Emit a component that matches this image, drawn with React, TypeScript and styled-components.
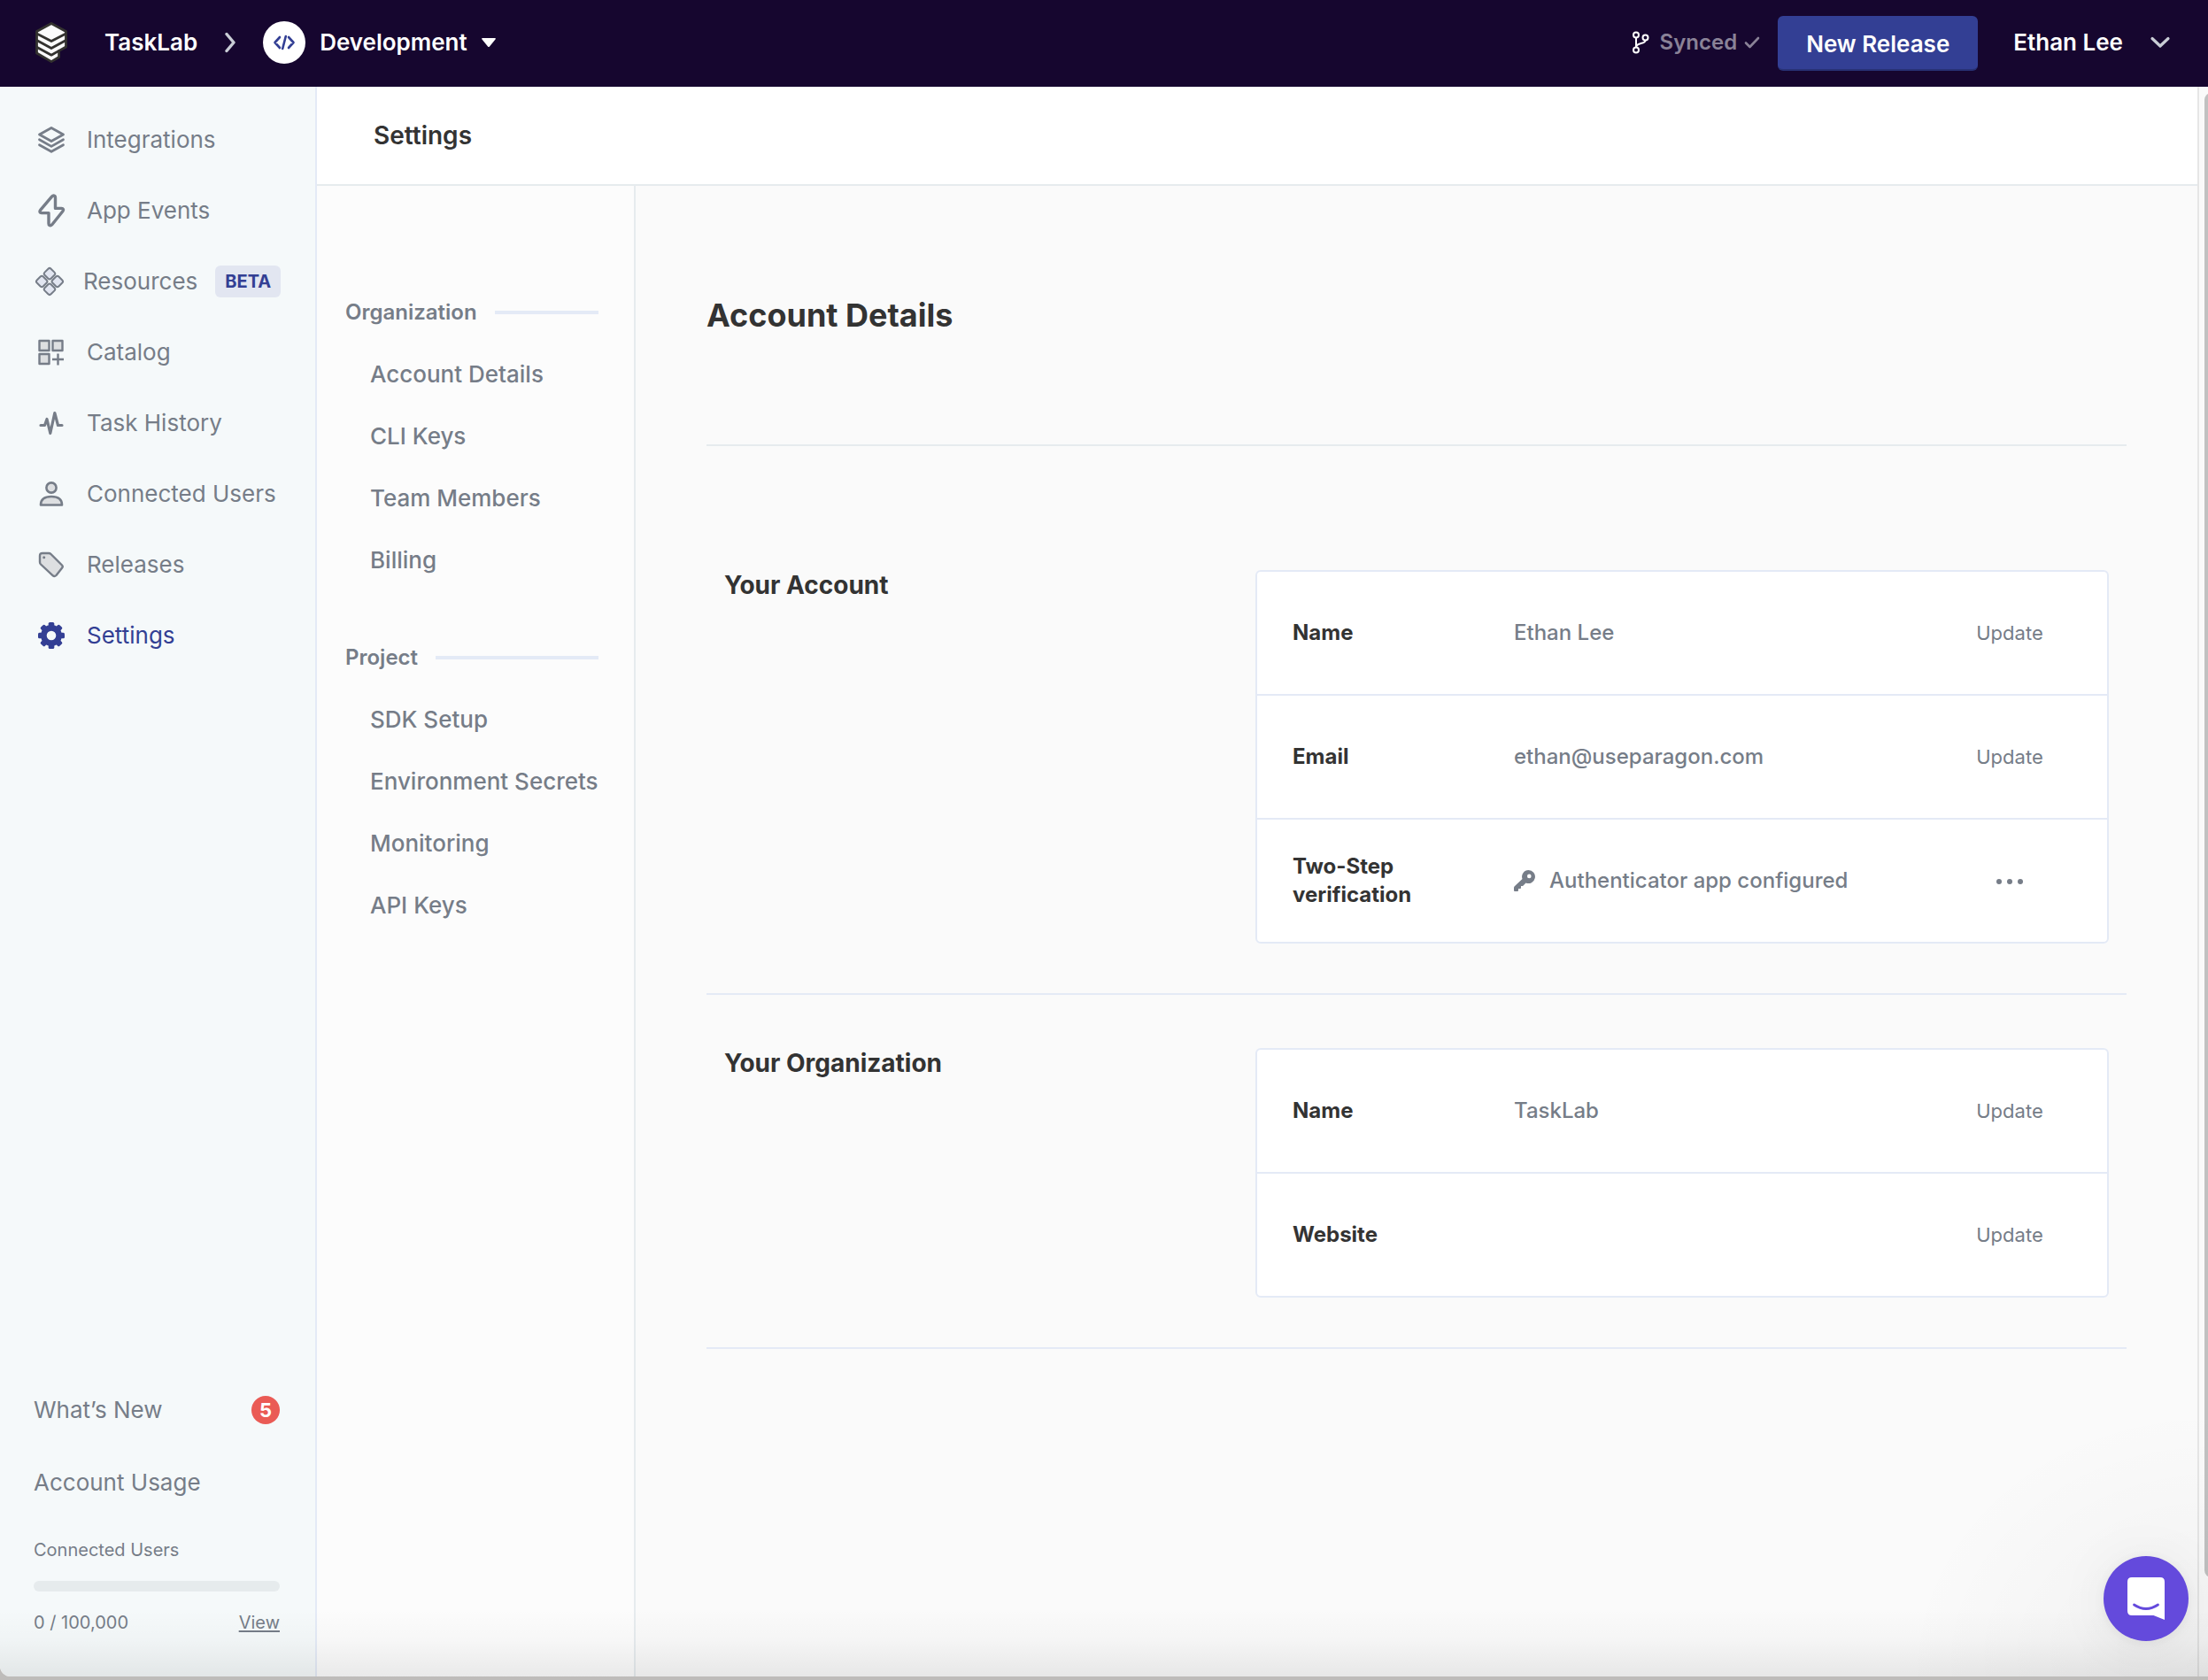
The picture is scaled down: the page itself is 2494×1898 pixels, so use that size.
import React from "react";
import styled, { createGlobalStyle, css } from "styled-components";

const color = {
  topbar: "#16062f",
  primary: "#333f94",
  primaryShade: "#283275",
  ink: "#333333",
  muted: "#767d88",
  line: "#e6ebee",
  lineBlue: "#e4eaf6",
  sidebar: "#f5f9fa",
};

const GlobalStyle = createGlobalStyle`
  * { box-sizing: border-box; }
  html, body, #root { height: 100%; }
  body {
    margin: 0;
    background: #bebcba;
    color: ${color.ink};
    font-family: Inter, "Liberation Sans", sans-serif;
    font-size: 26px;
    line-height: 32px;
    overflow: hidden;
  }
  h1, h2, h3, p, ul { margin: 0; padding: 0; }
  ul { list-style: none; }
  a { color: inherit; text-decoration: none; }
  button { font: inherit; color: inherit; background: none; border: 0; padding: 0; cursor: pointer; }
  svg { display: block; flex: none; }
`;

const Desktop = styled.div`
  height: 100%;
  padding-bottom: 4px;
`;

const Window = styled.div`
  position: relative;
  display: flex;
  flex-direction: column;
  height: 100%;
  overflow: hidden;
  border-bottom-left-radius: 12px;
  background: #fafafa;
`;

const Topbar = styled.header`
  display: flex;
  align-items: center;
  justify-content: space-between;
  height: 98px;
  flex: none;
  padding: 0 42px 0 38px;
  background: ${color.topbar};
  color: #ffffff;
  font-weight: 600;
`;

const Crumbs = styled.nav`
  display: flex;
  align-items: center;
  padding-bottom: 2px;
`;

const LogoLink = styled.a`
  display: flex;
  margin-right: 40px;
`;

const CrumbChevron = styled.span`
  display: flex;
  margin: 0 30px;
  color: #c9cdd6;
`;

const ProjectButton = styled.button`
  display: flex;
  align-items: center;
  gap: 16px;
`;

const ProjectBadge = styled.span`
  display: grid;
  place-items: center;
  width: 48px;
  height: 48px;
  border-radius: 50%;
  background: #ffffff;
  color: ${color.primary};
`;

const TopActions = styled.div`
  display: flex;
  align-items: center;
`;

const SyncStatus = styled.div`
  display: flex;
  align-items: center;
  padding-bottom: 2px;
  margin-right: 20px;
  color: #8a8297;
  font-size: 24px;
`;

const SyncLabel = styled.span`
  margin: 0 8px 0 12px;
`;

const ReleaseButton = styled.button`
  height: 62px;
  padding: 4px 32px 0;
  border-radius: 6px;
  border-bottom: 2px solid ${color.primaryShade};
  background: ${color.primary};
  color: #ffffff;
  font-weight: 600;
`;

const UserButton = styled.button`
  display: flex;
  align-items: center;
  gap: 30px;
  margin-left: 40px;
  padding-bottom: 2px;
`;

const Body = styled.div`
  display: flex;
  flex: 1;
  min-height: 0;
`;

const Sidebar = styled.aside`
  display: flex;
  flex-direction: column;
  justify-content: space-between;
  flex: none;
  width: 358px;
  padding: 20px 40px 49px 38px;
  border-right: 2px solid ${color.lineBlue};
  background: ${color.sidebar};
  color: ${color.muted};
`;

const NavLink = styled.a<{ $active?: boolean }>`
  display: flex;
  align-items: center;
  gap: 20px;
  height: 80px;
  white-space: nowrap;
  ${(p) => p.$active && css`color: ${color.primary};`}
`;

const NavIcon = styled.span<{ $narrow?: boolean }>`
  display: flex;
  justify-content: center;
  flex: none;
  width: ${(p) => (p.$narrow ? 36 : 40)}px;
`;

const BetaTag = styled.span`
  margin-left: auto;
  padding: 0 11px;
  border-radius: 6px;
  background: #e2e6f1;
  color: ${color.primary};
  font-size: 20px;
  font-weight: 700;
  line-height: 36px;
`;

const FooterLink = styled.a`
  display: flex;
  align-items: center;
  justify-content: space-between;
  height: 82px;
`;

const CountBadge = styled.span`
  width: 32px;
  border-radius: 16px;
  background: #ea5b55;
  color: #ffffff;
  font-size: 22px;
  font-weight: 700;
  line-height: 32px;
  text-align: center;
`;

const Usage = styled.section`
  display: flex;
  flex-direction: column;
  gap: 23px;
  padding-top: 23px;
  font-size: 20px;
  line-height: 24px;
`;

const UsageTrack = styled.div`
  height: 12px;
  border-radius: 6px;
  background: #e6ebed;
`;

const UsageRow = styled.div`
  display: flex;
  justify-content: space-between;
`;

const UsageLink = styled.a`
  text-decoration: underline;
  text-underline-offset: 2px;
`;

const Page = styled.div`
  display: flex;
  flex-direction: column;
  flex: 1;
  min-width: 0;
`;

const PageHeader = styled.div`
  flex: none;
  height: 112px;
  padding: 0 64px;
  border-bottom: 2px solid ${color.line};
  background: #ffffff;
`;

const PageTitle = styled.h1`
  font-size: 28px;
  font-weight: 600;
  line-height: 110px;
`;

const Columns = styled.div`
  display: flex;
  flex: 1;
  min-height: 0;
`;

const SettingsNav = styled.nav`
  display: flex;
  flex-direction: column;
  gap: 40px;
  flex: none;
  width: 360px;
  padding: 108px 40px 0 32px;
  border-right: 2px solid ${color.line};
  background: #fcfcfc;
  color: ${color.muted};
`;

const GroupTitle = styled.h2`
  display: flex;
  align-items: center;
  gap: 20px;
  height: 70px;
  font-size: 24px;
  font-weight: 600;

  &::after {
    content: "";
    flex: 1;
    height: 4px;
    background: ${color.lineBlue};
  }
`;

const GroupLink = styled.a`
  display: block;
  padding-left: 28px;
  font-weight: 500;
  line-height: 70px;
  white-space: nowrap;
`;

const Main = styled.main`
  flex: 1;
  min-width: 0;
  padding: 0 80px;
`;

const MainTitle = styled.h2`
  padding: 124px 0;
  margin-bottom: 80px;
  border-bottom: 2px solid ${color.line};
  font-size: 36px;
  font-weight: 700;
  line-height: 44px;
`;

const Section = styled.section`
  display: flex;
  align-items: flex-start;
  padding: 60px 20px 56px;
  border-bottom: 2px solid ${color.lineBlue};
`;

const SectionTitle = styled.h3`
  flex: 0 0 600px;
  font-size: 28px;
  font-weight: 700;
  line-height: 34px;
`;

const Card = styled.table`
  flex: 1;
  width: 100%;
  table-layout: fixed;
  border: 2px solid ${color.lineBlue};
  border-radius: 6px;
  border-collapse: separate;
  border-spacing: 0;
  background: #ffffff;
  font-size: 24px;
`;

const CardRow = styled.tr`
  height: 140px;

  & > * {
    padding: 0;
    border-bottom: 2px solid ${color.lineBlue};
  }

  &:last-child {
    height: 138px;
  }

  &:last-child > * {
    border-bottom: 0;
  }
`;

const RowLabel = styled.th`
  width: 290px;
  && {
    padding: 0 80px 0 40px;
  }
  font-weight: 700;
  text-align: left;
`;

const RowValue = styled.td`
  color: ${color.muted};
  font-weight: 500;
`;

const RowAction = styled.td`
  width: 220px;
  color: ${color.muted};
  text-align: center;
`;

const ValueWithIcon = styled.span`
  display: flex;
  align-items: center;
  gap: 16px;
`;

const UpdateButton = styled.button`
  font-size: 22px;
`;

const MoreButton = styled.button`
  display: inline-flex;
  vertical-align: middle;
`;

const ScrollRail = styled.div`
  flex: none;
  width: 12px;
  padding: 7px 0 112px 6px;
  border-left: 2px solid #e6e6e6;
  background: #fafafa;
  overflow: hidden;
`;

const ScrollThumb = styled.div`
  width: 16px;
  height: 100%;
  border-radius: 8px;
  background: #c1c1c1;
`;

const BottomShade = styled.div`
  position: absolute;
  inset: auto 0 0 0;
  height: 76px;
  background: linear-gradient(to bottom, rgba(0, 0, 0, 0), rgba(0, 0, 0, 0.02) 45%, rgba(0, 0, 0, 0.075));
  pointer-events: none;
`;

const CornerShade = styled.div`
  position: absolute;
  right: 0;
  bottom: 0;
  width: 340px;
  height: 300px;
  background: radial-gradient(ellipse at bottom right, rgba(0, 0, 0, 0.04), rgba(0, 0, 0, 0) 72%);
  pointer-events: none;
`;

const ChatButton = styled.button`
  position: absolute;
  right: 22px;
  bottom: 40px;
  display: grid;
  place-items: center;
  width: 96px;
  height: 96px;
  border-radius: 50%;
  background: #644adc;
  box-shadow: 0 2px 12px rgba(0, 0, 0, 0.06), 0 4px 64px rgba(0, 0, 0, 0.06);
`;

/* ---------- drawings ---------- */

const Logo = () => (
  <svg width="40" height="48" viewBox="0 0 40 48" fill="#fbfbfb" stroke="#33322f" strokeWidth="2.800" strokeLinejoin="round">
    <path d="M20 2.400 36.500 11.500V29L28.600 33.400V40.500L20 45.600 3.500 36V11.500Z" />
    <path d="M3.500 14 20 22.500 36.500 14M3.500 21.500 20 30.500 36.500 21.500M3.500 29.200 20 38.200 28.600 33.400" fill="none" />
  </svg>
);

const ChevronRight = () => (
  <svg width="14" height="24" viewBox="0 0 14 24" fill="none" stroke="currentColor" strokeWidth="3.400" strokeLinecap="round" strokeLinejoin="round">
    <path d="M3 2.500 11 12 3 21.500" />
  </svg>
);

const CodeIcon = () => (
  <svg width="26" height="20" viewBox="0 0 26 20" fill="none" stroke="currentColor" strokeWidth="2.600" strokeLinecap="round" strokeLinejoin="round">
    <path d="M8 4 2.500 10 8 16M18 4 23.500 10 18 16M14.800 3 11.200 17" />
  </svg>
);

const CaretDown = () => (
  <svg width="16" height="10" viewBox="0 0 16 10" fill="currentColor">
    <path d="M1 0H15Q16.500 .5 15.500 1.600L9 9.400Q8 10.400 7 9.400L.5 1.600Q-.5 .5 1 0Z" />
  </svg>
);

const BranchIcon = () => (
  <svg width="20" height="26" viewBox="0 0 20 26" fill="none" stroke="#ffffff" strokeWidth="2">
    <circle cx="5" cy="4.500" r="3" />
    <circle cx="5" cy="21.500" r="3" />
    <circle cx="15.500" cy="7.500" r="3" />
    <path d="M5 7.500V18.500M15.500 10.500C15.500 15.500 5 12.500 5 18.500" />
  </svg>
);

const CheckIcon = () => (
  <svg width="18" height="14" viewBox="0 0 18 14" fill="none" stroke="currentColor" strokeWidth="2.600" strokeLinecap="round" strokeLinejoin="round">
    <path d="M2 7.500 6.500 12 16 2" />
  </svg>
);

const ChevronDown = () => (
  <svg width="24" height="14" viewBox="0 0 24 14" fill="none" stroke="#c9cdd6" strokeWidth="3.200" strokeLinecap="round" strokeLinejoin="round">
    <path d="M3 2.500 12 11 21 2.500" />
  </svg>
);

const LayersIcon = () => (
  <svg width="32" height="32" viewBox="0 0 32 32" fill="none" stroke="currentColor" strokeWidth="2.800" strokeLinejoin="round" strokeLinecap="round">
    <path d="M16 2.500 29.500 10 16 17.500 2.500 10Z" />
    <path d="M2.500 15.800 16 23.400 29.500 15.800M2.500 21.700 16 29.300 29.500 21.700" />
  </svg>
);

const BoltIcon = () => (
  <svg width="32" height="38" viewBox="0 0 32 38" fill="none" stroke="currentColor" strokeWidth="3.400" strokeLinejoin="round">
    <path d="M16.500 3.200 3.800 18.200C2.300 20 3 21.600 5 21.600H13V33.500C13 36 15.200 36.500 16.800 34.700L28.800 19.700C30.200 17.900 29.400 16.400 27.500 16.400H20.500V4.400C20.500 1.800 18.200 1.200 16.500 3.200Z" />
  </svg>
);

const diamondCentres: [number, number][] = [[17, 8.2], [8.2, 17], [25.8, 17], [17, 25.8]];

const ResourcesIcon = () => (
  <svg width="34" height="34" viewBox="0 0 34 34" fill="#e2e6f1" stroke="currentColor" strokeWidth="2">
    {diamondCentres.map(([x, y]) => (
      <rect key={`${x}-${y}`} x={x - 5} y={y - 5} width="10" height="10" rx="2.200" transform={`rotate(45 ${x} ${y})`} />
    ))}
  </svg>
);

const CatalogIcon = () => (
  <svg width="30" height="30" viewBox="0 0 30 30" fill="#dddfe1" stroke="currentColor" strokeWidth="2.400" strokeLinejoin="round">
    <rect x="1.500" y="2" width="11" height="11" />
    <rect x="16.500" y="2" width="11" height="11" />
    <rect x="1.500" y="17" width="11" height="11" />
    <path d="M22.500 16.500V29.500M16 23H29" />
  </svg>
);

const PulseIcon = () => (
  <svg width="30" height="30" viewBox="0 0 30 30" fill="none" stroke="currentColor" strokeWidth="3.200" strokeLinecap="round" strokeLinejoin="round">
    <path d="M3 17.500H7.500L10 10.500 13.800 26.500 18.800 3.500 22.500 17.500H27" />
  </svg>
);

const PersonIcon = () => (
  <svg width="30" height="30" viewBox="0 0 30 30" fill="#dddfe1" stroke="currentColor" strokeWidth="2.600" strokeLinejoin="round">
    <circle cx="15" cy="8" r="5.600" />
    <path d="M3 27.500C3 20.500 8 18 15 18S27 20.500 27 27.500Z" />
  </svg>
);

const TagIcon = () => (
  <svg width="30" height="30" viewBox="0 0 30 30" fill="#dddfe1" stroke="currentColor" strokeWidth="2.400" strokeLinejoin="round">
    <path d="M2 5Q2 2 5 2H12Q13.500 2 14.500 3L27 15.500Q28.500 17 27 18.700L20.500 27Q18.500 29 16.500 27.200L3 14.500Q2 13.500 2 12Z" />
    <circle cx="6.700" cy="6.800" r="1.500" fill="currentColor" stroke="none" />
  </svg>
);

const gearAngles = [0, 45, 90, 135];

const GearIcon = () => (
  <svg width="30" height="30" viewBox="0 0 30 30" fill="none" stroke="currentColor">
    <circle cx="15" cy="15" r="8.600" strokeWidth="6.600" />
    <g fill="currentColor" stroke="none">
      {gearAngles.map((a) => (
        <g key={a} transform={`rotate(${a} 15 15)`}>
          <rect x="11.700" y="0" width="6.600" height="6" rx="1.600" />
          <rect x="11.700" y="24" width="6.600" height="6" rx="1.600" />
        </g>
      ))}
    </g>
  </svg>
);

const KeyIcon = () => (
  <svg width="24" height="24" viewBox="0 0 24 24" fill="currentColor">
    <path fillRule="evenodd" d="M16.500 0A7.500 7.500 0 0 0 9.500 10L.5 18.500Q0 19 0 20V23Q0 24 1 24H4Q5 24 5 23V21H7Q8 21 8 20V18H10L13.500 14.400A7.500 7.500 0 1 0 16.500 0ZM17.300 4.600A2.300 2.300 0 1 1 17.300 9.200 2.300 2.300 0 0 1 17.300 4.600Z" />
  </svg>
);

const DotsIcon = () => (
  <svg width="32" height="8" viewBox="0 0 32 8" fill={color.muted}>
    <circle cx="4" cy="4" r="3" />
    <circle cx="16" cy="4" r="3" />
    <circle cx="28" cy="4" r="3" />
  </svg>
);

const ChatIcon = () => (
  <svg width="42" height="48" viewBox="0 0 42 48">
    <path d="M5 0H37Q42 0 42 5V48L29.500 43H5Q0 43 0 38V5Q0 0 5 0Z" fill="#ffffff" />
    <path d="M7.500 31Q21 40 34.500 31" fill="none" stroke="#644adc" strokeWidth="2.800" strokeLinecap="round" />
  </svg>
);

/* ---------- data ---------- */

type NavEntry = { label: string; icon: React.ReactNode; active?: boolean; beta?: boolean };

const navEntries: NavEntry[] = [
  { label: "Integrations", icon: <LayersIcon /> },
  { label: "App Events", icon: <BoltIcon /> },
  { label: "Resources", icon: <ResourcesIcon />, beta: true },
  { label: "Catalog", icon: <CatalogIcon /> },
  { label: "Task History", icon: <PulseIcon /> },
  { label: "Connected Users", icon: <PersonIcon /> },
  { label: "Releases", icon: <TagIcon /> },
  { label: "Settings", icon: <GearIcon />, active: true },
];

const settingsGroups = [
  { title: "Organization", links: ["Account Details", "CLI Keys", "Team Members", "Billing"] },
  { title: "Project", links: ["SDK Setup", "Environment Secrets", "Monitoring", "API Keys"] },
];

type Field = { label: string; value?: string; secured?: boolean };

const sections: { title: string; fields: Field[] }[] = [
  {
    title: "Your Account",
    fields: [
      { label: "Name", value: "Ethan Lee" },
      { label: "Email", value: "ethan@useparagon.com" },
      { label: "Two-Step verification", value: "Authenticator app configured", secured: true },
    ],
  },
  {
    title: "Your Organization",
    fields: [{ label: "Name", value: "TaskLab" }, { label: "Website" }],
  },
];

const FieldRow = ({ label, value, secured }: Field) => (
  <CardRow>
    <RowLabel scope="row">{label}</RowLabel>
    <RowValue>
      {secured ? (
        <ValueWithIcon>
          <KeyIcon />
          {value}
        </ValueWithIcon>
      ) : (
        value
      )}
    </RowValue>
    <RowAction>
      {secured ? (
        <MoreButton type="button" aria-label="More options">
          <DotsIcon />
        </MoreButton>
      ) : (
        <UpdateButton type="button">Update</UpdateButton>
      )}
    </RowAction>
  </CardRow>
);

export default function App() {
  return (
    <Desktop>
      <GlobalStyle />
      <Window>
        <Topbar>
          <Crumbs aria-label="Project">
            <LogoLink href="#home" aria-label="Home">
              <Logo />
            </LogoLink>
            <a href="#tasklab">TaskLab</a>
            <CrumbChevron>
              <ChevronRight />
            </CrumbChevron>
            <ProjectButton type="button">
              <ProjectBadge>
                <CodeIcon />
              </ProjectBadge>
              Development
              <CaretDown />
            </ProjectButton>
          </Crumbs>
          <TopActions>
            <SyncStatus>
              <BranchIcon />
              <SyncLabel>Synced</SyncLabel>
              <CheckIcon />
            </SyncStatus>
            <ReleaseButton type="button">New Release</ReleaseButton>
            <UserButton type="button">
              Ethan Lee
              <ChevronDown />
            </UserButton>
          </TopActions>
        </Topbar>
        <Body>
          <Sidebar>
            <nav aria-label="Main">
              <ul>
                {navEntries.map((entry) => (
                  <li key={entry.label}>
                    <NavLink href="#" $active={entry.active}>
                      <NavIcon $narrow={entry.beta}>{entry.icon}</NavIcon>
                      {entry.label}
                      {entry.beta && <BetaTag>BETA</BetaTag>}
                    </NavLink>
                  </li>
                ))}
              </ul>
            </nav>
            <div>
              <FooterLink href="#news">
                What’s New
                <CountBadge>5</CountBadge>
              </FooterLink>
              <FooterLink href="#usage">Account Usage</FooterLink>
              <Usage>
                <p>Connected Users</p>
                <UsageTrack />
                <UsageRow>
                  <span>0 / 100,000</span>
                  <UsageLink href="#view">View</UsageLink>
                </UsageRow>
              </Usage>
            </div>
          </Sidebar>
          <Page>
            <PageHeader>
              <PageTitle>Settings</PageTitle>
            </PageHeader>
            <Columns>
              <SettingsNav aria-label="Settings">
                {settingsGroups.map((group) => (
                  <div key={group.title}>
                    <GroupTitle>{group.title}</GroupTitle>
                    <ul>
                      {group.links.map((link) => (
                        <li key={link}>
                          <GroupLink href="#">{link}</GroupLink>
                        </li>
                      ))}
                    </ul>
                  </div>
                ))}
              </SettingsNav>
              <Main>
                <MainTitle>Account Details</MainTitle>
                {sections.map((section) => (
                  <Section key={section.title}>
                    <SectionTitle>{section.title}</SectionTitle>
                    <Card aria-label={section.title}>
                      <tbody>
                        {section.fields.map((field) => (
                          <FieldRow key={field.label} {...field} />
                        ))}
                      </tbody>
                    </Card>
                  </Section>
                ))}
              </Main>
            </Columns>
          </Page>
          <ScrollRail aria-hidden="true">
            <ScrollThumb />
          </ScrollRail>
        </Body>
        <BottomShade />
        <CornerShade />
        <ChatButton type="button" aria-label="Open chat">
          <ChatIcon />
        </ChatButton>
      </Window>
    </Desktop>
  );
}
